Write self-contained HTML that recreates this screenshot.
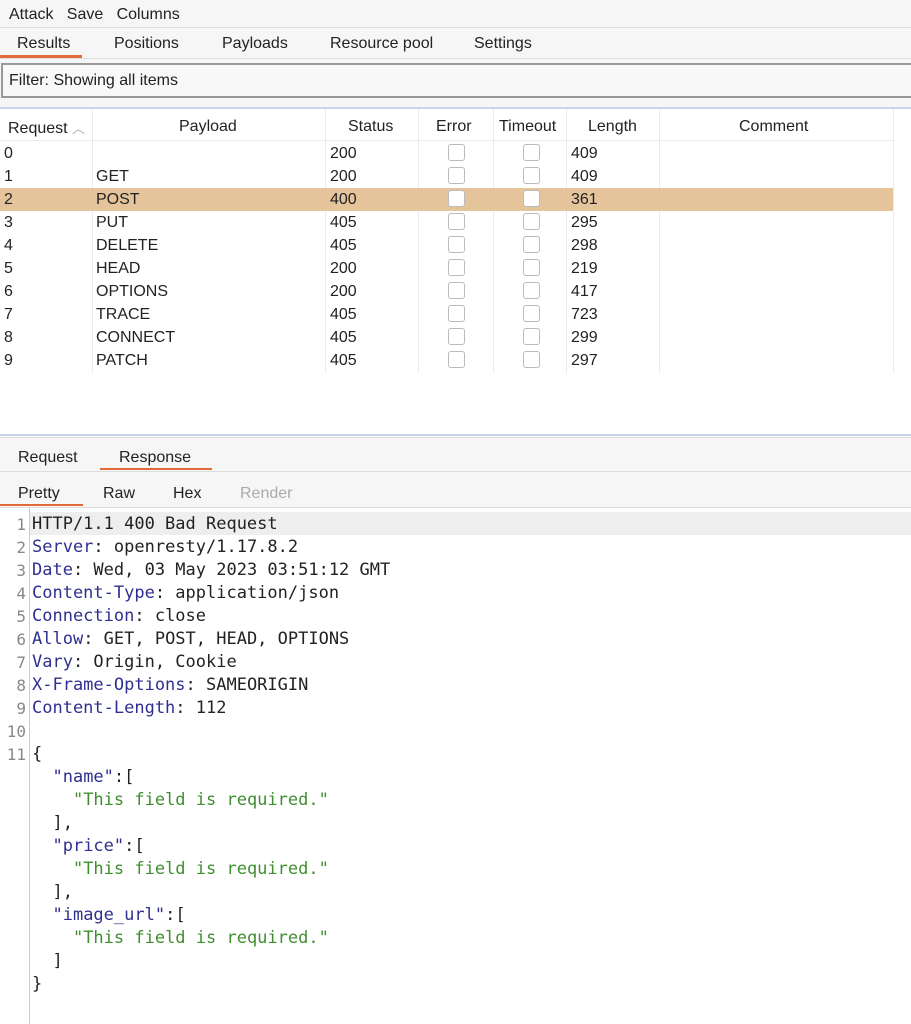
<!DOCTYPE html>
<html><head><meta charset="utf-8"><style>
*{margin:0;padding:0;box-sizing:border-box}
body{width:911px;height:1024px;background:#fff;font-family:"Liberation Sans","DejaVu Sans",sans-serif;font-size:16px;color:#222;position:relative;overflow:hidden}
.a{position:absolute;white-space:pre}
.m{font-family:"DejaVu Sans Mono","Liberation Mono",monospace;font-size:17px}
.k{color:#2f2f8f}.s{color:#3f8f2f}
.cb{position:absolute;width:17px;height:17px;border:1px solid #bbb;border-radius:3px;background:#fff}
.vl{position:absolute;width:1px;background:#e8eaee}
</style></head><body>
<div class="a" style="left:0;top:0;width:911px;height:28px;background:#f6f6f6"></div>
<div class="a" style="left:9px;top:6px">Attack   Save   Columns</div>
<div class="a" style="left:0;top:27px;width:911px;height:1px;background:#ddd"></div>
<div class="a" style="left:0;top:28px;width:911px;height:32px;background:#f6f6f6"></div>
<div class="a" style="left:17px;top:35px">Results</div>
<div class="a" style="left:114px;top:35px">Positions</div>
<div class="a" style="left:222px;top:35px">Payloads</div>
<div class="a" style="left:330px;top:35px">Resource pool</div>
<div class="a" style="left:474px;top:35px">Settings</div>
<div class="a" style="left:0;top:55px;width:82px;height:3px;background:#e06a3a"></div>
<div class="a" style="left:0;top:58px;width:911px;height:1px;background:#ddd"></div>
<div class="a" style="left:0;top:59px;width:911px;height:49px;background:#f6f6f6"></div>
<div class="a" style="left:1px;top:63px;width:912px;height:35px;border:2px solid #999;background:#f8f8f8"></div>
<div class="a" style="left:9px;top:72px">Filter: Showing all items</div>
<div class="a" style="left:0;top:107px;width:911px;height:2px;background:#c8d4ec"></div>
<div class="a" style="left:0;top:109px;width:911px;height:326px;background:#fff"></div>
<div class="a" style="left:0;top:140px;width:893px;height:1px;background:#e8eaee"></div>
<div class="vl" style="left:92px;top:109px;height:264px"></div>
<div class="vl" style="left:325px;top:109px;height:264px"></div>
<div class="vl" style="left:418px;top:109px;height:264px"></div>
<div class="vl" style="left:493px;top:109px;height:264px"></div>
<div class="vl" style="left:566px;top:109px;height:264px"></div>
<div class="vl" style="left:659px;top:109px;height:264px"></div>
<div class="vl" style="left:893px;top:109px;height:264px"></div>
<div class="a" style="left:8px;top:118px">Request <span style="color:#aaa;font-size:13px">︿</span></div>
<div class="a" style="left:179px;top:118px">Payload</div>
<div class="a" style="left:348px;top:118px">Status</div>
<div class="a" style="left:436px;top:118px">Error</div>
<div class="a" style="left:499px;top:118px">Timeout</div>
<div class="a" style="left:588px;top:118px">Length</div>
<div class="a" style="left:739px;top:118px">Comment</div>
<div class="a" style="left:0;top:188px;width:893px;height:23px;background:#e5c49c"></div>
<div id="rows"></div>
<script>
var d=[["0","","200","409"],["1","GET","200","409"],["2","POST","400","361"],["3","PUT","405","295"],["4","DELETE","405","298"],["5","HEAD","200","219"],["6","OPTIONS","200","417"],["7","TRACE","405","723"],["8","CONNECT","405","299"],["9","PATCH","405","297"]];
var h="";d.forEach(function(r,i){var y=145+i*23;
h+='<div class="a" style="left:4px;top:'+y+'px">'+r[0]+'</div><div class="a" style="left:96px;top:'+y+'px">'+r[1]+'</div><div class="a" style="left:330px;top:'+y+'px">'+r[2]+'</div><div class="a" style="left:571px;top:'+y+'px">'+r[3]+'</div><div class="cb" style="left:448px;top:'+(y-1)+'px"></div><div class="cb" style="left:523px;top:'+(y-1)+'px"></div>';});
document.getElementById("rows").innerHTML=h;
</script>
<div class="a" style="left:0;top:434px;width:911px;height:2px;background:#c8d4ec"></div>
<div class="a" style="left:0;top:438px;width:911px;height:70px;background:#f6f6f6"></div>
<div class="a" style="left:0;top:437px;width:911px;height:1px;background:#ddd"></div>
<div class="a" style="left:18px;top:449px">Request</div>
<div class="a" style="left:119px;top:449px">Response</div>
<div class="a" style="left:100px;top:468px;width:112px;height:2px;background:#e06a3a"></div>
<div class="a" style="left:0;top:471px;width:911px;height:1px;background:#ddd"></div>
<div class="a" style="left:18px;top:485px">Pretty</div>
<div class="a" style="left:103px;top:485px">Raw</div>
<div class="a" style="left:173px;top:485px">Hex</div>
<div class="a" style="left:240px;top:485px;color:#aaa">Render</div>
<div class="a" style="left:0;top:504px;width:83px;height:2px;background:#e06a3a"></div>
<div class="a" style="left:0;top:507px;width:911px;height:1px;background:#ddd"></div>
<div class="a" style="left:0;top:508px;width:911px;height:516px;background:#fff"></div>
<div class="a" style="left:29px;top:508px;width:1px;height:516px;background:#ccc"></div>
<div class="a" style="left:30px;top:512px;width:881px;height:23px;background:#eeeeee"></div>
<div class="a m" style="left:0;top:513px;line-height:23px;color:#888;text-align:right;width:26px;font-size:16px">1
2
3
4
5
6
7
8
9
10
11</div>
<div class="a m" style="left:32px;top:513px;line-height:23px;color:#222">HTTP/1.1 400 Bad Request
<span class="k">Server</span>: openresty/1.17.8.2
<span class="k">Date</span>: Wed, 03 May 2023 03:51:12 GMT
<span class="k">Content-Type</span>: application/json
<span class="k">Connection</span>: close
<span class="k">Allow</span>: GET, POST, HEAD, OPTIONS
<span class="k">Vary</span>: Origin, Cookie
<span class="k">X-Frame-Options</span>: SAMEORIGIN
<span class="k">Content-Length</span>: 112

{
  <span class="k">"name"</span>:[
    <span class="s">"This field is required."</span>
  ],
  <span class="k">"price"</span>:[
    <span class="s">"This field is required."</span>
  ],
  <span class="k">"image_url"</span>:[
    <span class="s">"This field is required."</span>
  ]
}</div>
</body></html>
